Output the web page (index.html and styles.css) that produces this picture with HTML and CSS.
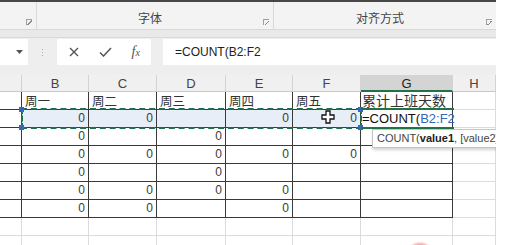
FILE: index.html
```html
<!DOCTYPE html>
<html lang="zh-CN">
<head>
<meta charset="utf-8">
<meta name="viewport" content="width=device-width, initial-scale=1.0">
<title>累计上班天数</title>
<link rel="stylesheet" href="styles.css">
</head>
<body>
<div class="app">
<div class="ribbon">
<div class="group first"><span class="launcher"></span></div>
<div class="group font"><span class="label">字体</span><span class="launcher"></span></div>
<div class="group align"><span class="label">对齐方式</span><span class="launcher"></span></div>
</div>
<div class="band"></div>
<div class="fbar">
<div class="namebox"><svg width="7" height="4" viewBox="0 0 7 4"><path d="M0 0h7L3.5 4z" fill="#555"/></svg></div>
<div class="grip"><i></i><i></i><i></i></div>
<div class="fbtns">
<span class="fbtn"><svg width="10" height="10" viewBox="0 0 10 10"><path d="M1 1l8 8M9 1l-8 8" stroke="#555" stroke-width="1.4"/></svg></span>
<span class="fbtn"><svg width="13" height="10" viewBox="0 0 13 10"><path d="M1 5.5l3.5 3.5L12 1" stroke="#555" stroke-width="1.5" fill="none"/></svg></span>
<span class="fbtn fx">f<span class="fxx">x</span></span>
</div>
<div class="finput">=COUNT(B2:F2</div>
</div>
<div class="sheet" id="sheet">
<div class="marquee"></div>
<span class="handle h1"></span><span class="handle h2"></span><span class="handle h3"></span><span class="handle h4"></span>
<div class="activebox"></div>
<div class="tip">COUNT(<b>value1</b>, [value2], ...)</div>
<svg class="cursor" width="14" height="14" viewBox="0 0 14 14"><path d="M5 1h4v4h4v4H9v4H5V9H1V5h4z" fill="#fff" stroke="#111" stroke-width="1.3"/></svg>
<div class="blob"></div>
</div>
</div>
<script>
let cols = ['', 'B', 'C', 'D', 'E', 'F', 'G', 'H']
let data = [
['', '周一', '周二', '周三', '周四', '周五', '累计上班天数', ''],
['', '0', '0', '', '0', '0', '', ''],
['', '0', '', '0', '', '', '', ''],
['', '0', '0', '0', '0', '0', '', ''],
['', '0', '', '0', '', '', '', ''],
['', '0', '0', '0', '0', '', '', ''],
['', '0', '0', '', '0', '', '', ''],
['', '', '', '', '', '', '', ''],
['', '', '', '', '', '', '', '']
]
let sheet = document.getElementById('sheet')
let frag = document.createDocumentFragment()
for (let c = 0; c < cols.length; c++) {
let h = document.createElement('div')
h.className = 'colhead' + (cols[c] == 'G' ? ' current' : '')
h.textContent = cols[c]
frag.append(h)
}
for (let r = 0; r < data.length; r++) {
for (let c = 0; c < cols.length; c++) {
let d = document.createElement('div')
let cls = 'cell'
if (r < 7 && c < 7) cls += ' ruled'
if (r == 0 && c > 0) cls += (c == 6 ? ' label big' : ' label')
if (r == 1 && c > 0 && c < 6) cls += ' sel'
if (r == 1 && c == 6) {
cls += ' edit'
d.innerHTML = '=COUNT(<span class="ref">B2:F2</span>'
} else {
d.textContent = data[r][c]
}
d.className = cls
frag.append(d)
}
}
sheet.prepend(frag)
</script>
</body>
</html>
```
FILE: styles.css
```css
body {
margin: 0;
background: #fff;
font-family: "Liberation Sans", "Noto Sans CJK SC", sans-serif;
overflow: hidden;
}
.app {
width: 496px;
}
.ribbon {
display: flex;
height: 27px;
background: #f3f3f3;
border-top: 2px solid #474747;
border-bottom: 1px solid #d8d8d8;
}
.group {
display: flex;
align-items: center;
border-right: 1px solid #d9d9d9;
font-family: "Noto Sans CJK SC", sans-serif;
font-size: 12px;
color: #444;
}
.group.first {
width: 36px;
justify-content: flex-end;
}
.group.font {
width: 236px;
}
.group.align {
flex: 1;
border-right: none;
}
.label {
flex: 1;
text-align: center;
padding-top: 4px;
}
.launcher {
width: 6px;
height: 6px;
margin: 13px 4px 0 0;
border-top: 1px solid #a0a0a0;
border-left: 1px solid #a0a0a0;
box-sizing: border-box;
background: linear-gradient(135deg, transparent 50%, #8a8a8a 50%, #8a8a8a 65%, transparent 65%);
}
.band {
height: 7px;
background: #e9e9e9;
border-bottom: 1px solid #dadada;
}
.fbar {
display: flex;
align-items: flex-start;
height: 36px;
padding-top: 1px;
background: #eeeeee;
}
.namebox {
width: 28px;
height: 26px;
background: #fff;
display: flex;
align-items: center;
justify-content: flex-end;
padding-right: 5px;
box-sizing: border-box;
}
.grip {
width: 29px;
height: 26px;
display: flex;
flex-direction: column;
align-items: center;
justify-content: center;
gap: 2px;
}
.grip i {
width: 1px;
height: 1px;
background: #aaa;
}
.fbtns {
width: 94px;
height: 26px;
background: #fff;
display: flex;
align-items: center;
padding-left: 2px;
box-sizing: border-box;
}
.fbtn {
width: 33px;
display: flex;
justify-content: center;
align-items: baseline;
}
.fx {
font-family: "Liberation Serif", serif;
font-style: italic;
font-size: 14px;
color: #555;
}
.fxx {
font-size: 10px;
}
.finput {
flex: 1;
margin-left: 12px;
height: 26px;
background: #fff;
font-size: 12px;
line-height: 26px;
padding-left: 12px;
color: #222;
}
.sheet {
position: relative;
display: grid;
grid-template-columns: 22px 67px 68px 69px 67px 68px 92px 43px;
grid-template-rows: 17px repeat(9, 18px);
height: 170px;
overflow: hidden;
background: #fff;
}
.colhead {
background: #f0f0f0;
border-right: 1px solid #d3d3d3;
border-bottom: 1px solid #c9c9c9;
text-align: center;
font-size: 13px;
line-height: 17px;
color: #444;
}
.colhead.current {
background: #d4d4d4;
border-bottom: 2px solid #217346;
color: #222;
}
.cell {
border-right: 1px solid #dcdcdc;
border-bottom: 1px solid #dcdcdc;
font-size: 12px;
line-height: 17px;
text-align: right;
padding-right: 3px;
color: #3a3a3a;
white-space: nowrap;
}
.cell.ruled {
border-color: #3a3a3a;
}
.label {
font-family: "Noto Sans CJK SC", sans-serif;
}
.cell.label {
text-align: left;
padding: 0 0 0 3px;
font-size: 12.5px;
line-height: 17px;
color: #333;
}
.cell.big {
font-size: 14px;
padding-left: 1px;
}
.sel {
background: #e7eef8;
}
.edit {
text-align: left;
padding: 0 0 0 1px;
font-size: 13px;
color: #111;
}
.ref {
color: #3568b8;
}
.marquee {
position: absolute;
left: 21px;
top: 33px;
width: 341px;
height: 21px;
border: 2px dashed #1f6e4b;
box-sizing: border-box;
}
.handle {
position: absolute;
width: 5px;
height: 5px;
background: #3468c0;
}
.h1 { left: 19px; top: 32px; }
.h2 { left: 19px; top: 50px; }
.h3 { left: 358px; top: 32px; }
.h4 { left: 358px; top: 50px; }
.activebox {
position: absolute;
left: 361px;
top: 33px;
width: 93px;
height: 21px;
border-top: 2px solid #217346;
border-bottom: 2px solid #217346;
box-sizing: border-box;
}
.tip {
position: absolute;
left: 372px;
top: 54px;
width: 124px;
height: 19px;
background: #fff;
border: 1px solid #c4c4c4;
border-right: none;
box-shadow: 1px 2px 3px rgba(0, 0, 0, .18);
box-sizing: border-box;
font-size: 11px;
line-height: 17px;
padding-left: 4px;
color: #444;
white-space: nowrap;
overflow: hidden;
}
.tip b {
color: #222;
}
.cursor {
position: absolute;
left: 321px;
top: 35px;
}
.blob {
position: absolute;
left: 407px;
top: 168px;
width: 26px;
height: 26px;
border-radius: 50%;
background: #f4a3a3;
filter: blur(1px);
}
```
